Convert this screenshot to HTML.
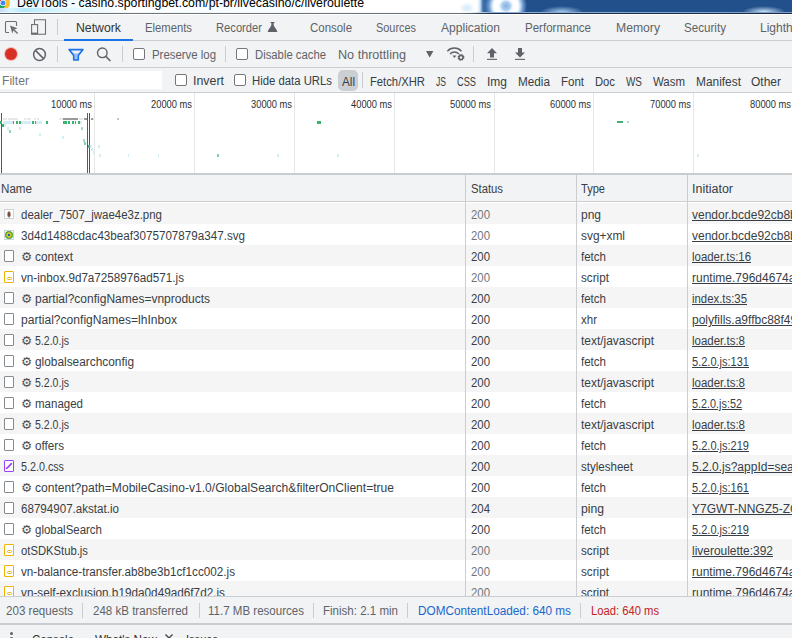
<!DOCTYPE html>
<html>
<head>
<meta charset="utf-8">
<title>DevTools</title>
<style>
html,body{margin:0;padding:0;}
body{width:792px;height:638px;overflow:hidden;position:relative;background:#fff;
 font-family:"Liberation Sans",sans-serif;font-size:12px;color:#383e45;}
.a{position:absolute;}
.t{position:absolute;white-space:nowrap;line-height:14px;transform-origin:0 0;}
.cb{position:absolute;width:10px;height:10px;border:1px solid #767676;border-radius:2px;background:#fff;}
.vd{position:absolute;width:1px;background:#cbcdd1;}
.row{position:absolute;left:0;width:792px;height:21px;background:#f5f5f5;}
.fi{position:absolute;left:4px;width:8px;height:10px;border:1px solid #868b90;border-radius:1px;background:#fff;}
.fi.js{border-color:#f0b400;}
.fi.css{border-color:#a142f4;}
.im{position:absolute;left:4px;width:8px;height:8px;border:1px solid #ced3db;background:#fff;}
.gl{position:absolute;top:93px;width:1px;height:80px;background:#e6e6e6;}
.d{position:absolute;height:3px;}
svg{position:absolute;overflow:visible;}
.z{z-index:3;}
.zb{z-index:2;}
</style>
</head>
<body>
<div class="a" style="left:0;top:0;width:792px;height:12px;background:#fff;"></div>
<div class="a" style="left:0;top:0;width:460px;height:12px;background:linear-gradient(90deg,#f2fcff 0,#eaf9ff 30px,#f6fdff 80px,#fff 140px,#f6fcff 250px,#fff 330px);"></div>
<div class="a" style="left:455px;top:0;width:337px;height:12px;background:linear-gradient(90deg,#fff 0,#fff 22px,#cfe3f7 25px,#3d6fab 28px,#2c5c99 34px,#22508a 40px);"></div>
<div class="a" style="left:459px;top:2px;width:16px;height:10px;background:radial-gradient(ellipse at 50% 60%,#cfe8fa 0,#fff 70%);"></div>
<div class="a" style="left:484px;top:0;width:44px;height:12px;overflow:hidden;"><div class="a" style="left:0;top:-16px;width:44px;height:44px;border-radius:50%;background:radial-gradient(circle,#8ab0dc 0,#a8cdf0 4px,#eef6fe 6.5px,#fff 8px,#fff 12px,#cfe3f7 14px,#6f9bd0 17px,rgba(34,80,138,0) 21px);"></div></div>
<div class="a" style="left:540px;top:6px;width:44px;height:6px;background:radial-gradient(ellipse at 50% 100%,#a8ccf0 0,#22508a 70%);"></div>
<div class="a" style="left:742px;top:6px;width:44px;height:6px;background:radial-gradient(ellipse at 50% 100%,#cfe6fb 0,#22508a 70%);"></div>
<div class="a" style="left:-4px;top:-4px;width:14px;height:14px;border-radius:50%;background:radial-gradient(circle,#4285f4 0,#4285f4 2px,#dbe7fb 2.7px,#dbe7fb 3px,rgba(255,255,255,0) 3.4px),conic-gradient(from 0deg at 9.5px 8.4px,#fbc02d 0 205deg,#1da462 205deg 282deg,#ea4335 282deg 330deg,#fbc02d 330deg);"></div>
<div class="a" style="left:0;top:8px;width:130px;height:4px;background:linear-gradient(90deg,#c9d8f4 0,#d8f4fd 10px,#b4e9fb 24px,#dcf5fd 60px,#fff 130px);"></div>
<div class="a" style="left:0;top:12px;width:792px;height:1px;background:linear-gradient(90deg,#eef6fb 0,#f4f9fc 470px,#8fb0d8 490px,#7a9cc8 792px);"></div>
<div class="a" style="left:0;top:13px;width:792px;height:1px;background:linear-gradient(90deg,#4a5a68 0,#6e7478 60px,#6e7478 460px,#1f2f48 490px,#1c2c44 792px);"></div>
<div class="a" style="left:0;top:14px;width:792px;height:1px;background:#fff;"></div>
<div class="a" style="left:0;top:15px;width:792px;height:25px;background:#f1f3f4;"></div>
<div class="a" style="left:0;top:40px;width:792px;height:1px;background:#cbcdd1;"></div>
<div class="a" style="left:64px;top:39px;width:69px;height:2px;background:#1a73e8;"></div>
<div class="vd" style="left:57px;top:19px;height:16px;"></div>
<div class="a" style="left:0;top:41px;width:792px;height:26px;background:#f1f3f4;"></div>
<div class="a" style="left:0;top:67px;width:792px;height:1px;background:#cbcdd1;"></div>
<div class="vd" style="left:57px;top:46px;height:16px;"></div>
<div class="vd" style="left:122px;top:46px;height:16px;"></div>
<div class="vd" style="left:225px;top:46px;height:16px;"></div>
<div class="vd" style="left:473px;top:46px;height:16px;"></div>
<div class="a" style="left:0;top:68px;width:792px;height:24px;background:#f1f3f4;"></div>
<div class="a" style="left:0;top:92px;width:792px;height:1px;background:#cbcdd1;"></div>
<div class="a" style="left:0;top:71px;width:162px;height:18px;background:#fff;"></div>
<div class="a" style="left:338px;top:70px;width:20px;height:21px;border-radius:5px;background:#cbcfd4;"></div>
<div class="vd" style="left:362px;top:72px;height:16px;"></div>
<div class="cb" style="left:133px;top:48px;"></div>
<div class="cb" style="left:236px;top:48px;"></div>
<div class="cb" style="left:175px;top:74px;"></div>
<div class="cb" style="left:234px;top:74px;"></div>
<div class="gl" style="left:94px;"></div>
<div class="gl" style="left:194px;"></div>
<div class="gl" style="left:294px;"></div>
<div class="gl" style="left:394px;"></div>
<div class="gl" style="left:494px;"></div>
<div class="gl" style="left:593px;"></div>
<div class="gl" style="left:693px;"></div>
<div class="a" style="left:1px;top:113px;width:1px;height:60px;background:#c1272d;"></div>
<div class="a" style="left:87px;top:113px;width:1px;height:60px;background:#1a66cc;"></div>
<div class="a" style="left:89px;top:113px;width:1px;height:60px;background:#c1272d;"></div>
<div class="a" style="left:0;top:173px;width:792px;height:2px;background:#c8cbcf;"></div>
<div class="d" style="left:3px;top:118px;width:1.5px;height:2px;background:#e8e8e8;"></div>
<div class="d" style="left:5px;top:118px;width:1.5px;height:2px;background:#e8e8e8;"></div>
<div class="d" style="left:8px;top:118px;width:1.5px;height:2px;background:#e8e8e8;"></div>
<div class="d" style="left:10px;top:118px;width:1.5px;height:2px;background:#e8e8e8;"></div>
<div class="d" style="left:12px;top:118px;width:1.5px;height:2px;background:#e8e8e8;"></div>
<div class="d" style="left:14px;top:118px;width:1.5px;height:2px;background:#e8e8e8;"></div>
<div class="d" style="left:16px;top:118px;width:1.5px;height:2px;background:#e8e8e8;"></div>
<div class="d" style="left:24px;top:118px;width:1.5px;height:2px;background:#e8e8e8;"></div>
<div class="d" style="left:27px;top:118px;width:1.5px;height:2px;background:#e8e8e8;"></div>
<div class="d" style="left:29px;top:118px;width:1.5px;height:2px;background:#e8e8e8;"></div>
<div class="d" style="left:34px;top:118px;width:1.5px;height:2px;background:#e8e8e8;"></div>
<div class="d" style="left:37px;top:118px;width:1.5px;height:2px;background:#e8e8e8;"></div>
<div class="d" style="left:59px;top:118px;width:4px;height:2px;background:#e8e8e8;"></div>
<div class="d" style="left:63px;top:118px;width:15px;height:2px;background:#9a9a9a;"></div>
<div class="d" style="left:79px;top:118px;width:4px;height:2px;background:#e8e8e8;"></div>
<div class="d" style="left:84px;top:118px;width:3px;height:2px;background:#9a9a9a;"></div>
<div class="d" style="left:91px;top:118px;width:2px;height:2px;background:#9a9a9a;"></div>
<div class="d" style="left:93px;top:118px;width:2px;height:2px;background:#e8e8e8;"></div>
<div class="d" style="left:117px;top:118px;width:2px;height:2px;background:#c4c4c4;"></div>
<div class="d" style="left:0px;top:121px;width:2px;height:3px;background:#3cb371;"></div>
<div class="d" style="left:3px;top:121px;width:10px;height:3px;background:#d4ecf6;"></div>
<div class="d" style="left:13px;top:121px;width:1px;height:3px;background:#3a93e0;"></div>
<div class="d" style="left:16px;top:121px;width:1.5px;height:3px;background:#3cb371;"></div>
<div class="d" style="left:19px;top:121px;width:2px;height:3px;background:#3cb371;"></div>
<div class="d" style="left:21px;top:121px;width:10px;height:3px;background:#d4ecf6;"></div>
<div class="d" style="left:32px;top:121px;width:1.5px;height:3px;background:#3cb371;"></div>
<div class="d" style="left:34.5px;top:121px;width:1.5px;height:3px;background:#3cb371;"></div>
<div class="d" style="left:36px;top:121px;width:6px;height:3px;background:#d4ecf6;"></div>
<div class="d" style="left:46px;top:121px;width:1.5px;height:3px;background:#3cb371;"></div>
<div class="d" style="left:63px;top:121px;width:4px;height:3px;background:#3cb371;"></div>
<div class="d" style="left:68px;top:121px;width:2px;height:3px;background:#3cb371;"></div>
<div class="d" style="left:72px;top:121px;width:2px;height:3px;background:#3cb371;"></div>
<div class="d" style="left:74.5px;top:121px;width:1px;height:3px;background:#3a93e0;"></div>
<div class="d" style="left:78px;top:121px;width:2px;height:3px;background:#3cb371;"></div>
<div class="d" style="left:80px;top:121px;width:2px;height:3px;background:#d4ecf6;"></div>
<div class="d" style="left:2px;top:124px;width:2px;height:3px;background:#3cb371;"></div>
<div class="d" style="left:4px;top:124px;width:2px;height:3px;background:#d4ecf6;"></div>
<div class="d" style="left:6.5px;top:127px;width:2px;height:3px;background:#d4ecf6;"></div>
<div class="d" style="left:18.5px;top:127px;width:2px;height:3px;background:#d4ecf6;"></div>
<div class="d" style="left:81px;top:127px;width:2px;height:3px;background:#a9dcc8;"></div>
<div class="d" style="left:9px;top:130px;width:2px;height:3px;background:#8fd6b8;"></div>
<div class="d" style="left:39px;top:133px;width:2px;height:3px;background:#d4ecf6;"></div>
<div class="d" style="left:61.5px;top:136px;width:2px;height:3px;background:#d4ecf6;"></div>
<div class="d" style="left:82.5px;top:139px;width:2px;height:3px;background:#9edcc0;"></div>
<div class="d" style="left:84px;top:142px;width:2px;height:3px;background:#7fd0a8;"></div>
<div class="d" style="left:88px;top:145px;width:2px;height:3px;background:#4fae82;"></div>
<div class="d" style="left:90px;top:145px;width:2px;height:3px;background:#d4ecf6;"></div>
<div class="d" style="left:98px;top:145px;width:2px;height:3px;background:#d4ecf6;"></div>
<div class="d" style="left:91px;top:148px;width:2px;height:3px;background:#d4ecf6;"></div>
<div class="d" style="left:93px;top:151px;width:2px;height:3px;background:#d4ecf6;"></div>
<div class="d" style="left:99px;top:154px;width:2px;height:3px;background:#d4ecf6;"></div>
<div class="d" style="left:127.5px;top:154px;width:1.5px;height:3px;background:#d4ecf6;"></div>
<div class="d" style="left:157.5px;top:154px;width:1.5px;height:3px;background:#d4ecf6;"></div>
<div class="d" style="left:217px;top:154px;width:1.5px;height:3px;background:#7fd0b0;"></div>
<div class="d" style="left:277px;top:154px;width:1.5px;height:3px;background:#d4ecf6;"></div>
<div class="d" style="left:337px;top:154px;width:1.5px;height:3px;background:#d4ecf6;"></div>
<div class="d" style="left:697px;top:154px;width:1.5px;height:3px;background:#d4ecf6;"></div>
<div class="d" style="left:317px;top:121px;width:4px;height:3px;background:#3cb371;"></div>
<div class="d" style="left:617px;top:121px;width:6px;height:2px;background:#3cb371;"></div>
<div class="d" style="left:627px;top:121px;width:2px;height:2px;background:#a8e0c0;"></div>
<div class="a" style="left:0;top:175px;width:792px;height:26px;background:#f1f3f4;"></div>
<div class="a" style="left:0;top:201px;width:792px;height:1px;background:#cbcdd1;"></div>
<div class="row" style="top:203px;"></div>
<div class="im" style="top:209px;"></div>
<div class="a" style="left:6px;top:210px;width:6px;height:8px;background:radial-gradient(ellipse 2.2px 4px at 50% 55%,#5e342a 0,#8a5a4c 50%,rgba(240,220,215,0) 100%);"></div>
<div class="im" style="top:230px;"></div>
<div class="a" style="left:5px;top:231px;width:8px;height:8px;border-radius:50%;background:radial-gradient(circle,#2060d0 0 1.2px,#d8c820 1.6px 2.4px,#4ea832 3px);"></div>
<div class="row" style="top:245px;"></div>
<div class="fi" style="top:250px;"></div>
<div class="fi js" style="top:271px;"></div>
<div class="a" style="left:6.5px;top:277px;width:3px;height:1px;border:1px solid #f0b400;border-radius:2px;"></div>
<div class="row" style="top:287px;"></div>
<div class="fi" style="top:292px;"></div>
<div class="fi" style="top:313px;"></div>
<div class="row" style="top:329px;"></div>
<div class="fi" style="top:334px;"></div>
<div class="fi" style="top:355px;"></div>
<div class="row" style="top:371px;"></div>
<div class="fi" style="top:376px;"></div>
<div class="fi" style="top:397px;"></div>
<div class="row" style="top:413px;"></div>
<div class="fi" style="top:418px;"></div>
<div class="fi" style="top:439px;"></div>
<div class="row" style="top:455px;"></div>
<div class="fi css" style="top:460px;"></div>
<svg style="left:4px;top:460px;" width="10" height="12"><path d="M2.6 8.4L3.4 7.6M4.4 6.8L7.4 3.6" stroke="#a142f4" stroke-width="1.7" stroke-linecap="round" fill="none"/></svg>
<div class="fi" style="top:481px;"></div>
<div class="row" style="top:497px;"></div>
<div class="fi" style="top:502px;"></div>
<div class="fi" style="top:523px;"></div>
<div class="row" style="top:539px;"></div>
<div class="fi js" style="top:544px;"></div>
<div class="a" style="left:6.5px;top:550px;width:3px;height:1px;border:1px solid #f0b400;border-radius:2px;"></div>
<div class="fi js" style="top:565px;"></div>
<div class="a" style="left:6.5px;top:571px;width:3px;height:1px;border:1px solid #f0b400;border-radius:2px;"></div>
<div class="row" style="top:581px;"></div>
<div class="fi js" style="top:586px;"></div>
<div class="a" style="left:6.5px;top:592px;width:3px;height:1px;border:1px solid #f0b400;border-radius:2px;"></div>
<div class="vd" style="left:465px;top:175px;height:421px;"></div>
<div class="vd" style="left:576px;top:175px;height:421px;"></div>
<div class="vd" style="left:687px;top:175px;height:421px;"></div>
<div class="a zb" style="left:0;top:596px;width:792px;height:1px;background:#cbcdd1;"></div>
<div class="a zb" style="left:0;top:597px;width:792px;height:26px;background:#f1f3f4;"></div>
<div class="vd zb" style="left:82px;top:603px;height:15px;"></div>
<div class="vd zb" style="left:199px;top:603px;height:15px;"></div>
<div class="vd zb" style="left:313px;top:603px;height:15px;"></div>
<div class="vd zb" style="left:407px;top:603px;height:15px;"></div>
<div class="vd zb" style="left:580px;top:603px;height:15px;"></div>
<div class="a zb" style="left:0;top:623px;width:792px;height:2px;background:#c8cbcf;"></div>
<div class="a zb" style="left:0;top:625px;width:792px;height:13px;background:#f1f3f4;"></div>
<div class="a zb" style="left:10px;top:632px;width:3px;height:3px;border-radius:50%;background:#5f6368;"></div>
<div class="a zb" style="left:10px;top:637px;width:3px;height:3px;border-radius:50%;background:#5f6368;"></div>
<svg class="zb" style="left:165px;top:634px;" width="8" height="8"><path d="M0.5 0.5L7.5 7.5M7.5 0.5L0.5 7.5" stroke="#444" stroke-width="1.4" fill="none"/></svg>
<svg style="left:4px;top:20px;" width="16" height="16"><path d="M12.5 6V2.5a1 1 0 0 0-1-1h-9a1 1 0 0 0-1 1v9a1 1 0 0 0 1 1H5" stroke="#6e6e6e" stroke-width="1.1" fill="none"/><path d="M6 5.5l7.5 2.8-3 1.2 3.6 3.6-1 1-3.6-3.6-1.2 3z" fill="#6e6e6e"/></svg>
<svg style="left:30px;top:18px;" width="18" height="18"><path d="M4.5 6V1.8h11v14.4H8" stroke="#6e6e6e" stroke-width="1.1" fill="none"/><rect x="1.6" y="6.6" width="6" height="9.6" stroke="#6e6e6e" stroke-width="1.1" fill="none"/><rect x="1.6" y="14.6" width="6" height="1.8" fill="#6e6e6e"/></svg>
<svg style="left:267px;top:22px;" width="11" height="10"><path d="M3.5 0h4v1h-.8v2.6L10.2 9a.6.6 0 0 1-.5.9H1.3a.6.6 0 0 1-.5-.9L4.3 3.6V1h-.8z" fill="#5f6368"/></svg>
<div class="a" style="left:4px;top:47px;width:14px;height:14px;border-radius:50%;background:#f4b8b4;"></div>
<div class="a" style="left:5px;top:48px;width:12px;height:12px;border-radius:50%;background:#d93025;"></div>
<svg style="left:32px;top:47px;" width="15" height="15"><circle cx="7.5" cy="7.5" r="5.9" stroke="#5f6368" stroke-width="1.5" fill="none"/><path d="M3.4 3.4L11.6 11.6" stroke="#5f6368" stroke-width="1.5"/></svg>
<svg style="left:68px;top:48px;" width="16" height="14"><path d="M1 1.6h14L10.3 7.4v4.6H5.7V7.4z" fill="#9fc3f8" stroke="#1a73e8" stroke-width="1.6" stroke-linejoin="round"/><path d="M3.4 2.7h9.2l-2.4 2.6h-4.4z" fill="#f1f3f4"/></svg>
<svg style="left:96px;top:46px;" width="16" height="16"><circle cx="6.3" cy="6.8" r="4.8" stroke="#5f6368" stroke-width="1.4" fill="none"/><path d="M9.8 10.4L14.4 15" stroke="#5f6368" stroke-width="1.5"/></svg>
<svg style="left:426px;top:51px;" width="8" height="7"><path d="M0 0h7.4L3.7 6.4z" fill="#5f6368"/></svg>
<svg style="left:446px;top:46px;" width="20" height="16"><path d="M1.4 5.2a9.5 9.5 0 0 1 14 0" stroke="#5f6368" stroke-width="1.5" fill="none"/><path d="M4 8a6 6 0 0 1 8.8 0" stroke="#5f6368" stroke-width="1.5" fill="none"/><path d="M6.4 9.6h4l-2 2.4z" fill="#5f6368"/><circle cx="15" cy="11.4" r="2.6" stroke="#5f6368" stroke-width="1.6" fill="none" stroke-dasharray="1.36 0.68"/><circle cx="15" cy="11.4" r="1.9" stroke="#5f6368" stroke-width="1.3" fill="none"/></svg>
<svg style="left:487px;top:48px;" width="10" height="12"><path d="M5 0l5 5.2H7V9.6H3V5.2H0z" fill="#5f6368"/><rect x="0" y="10.8" width="10" height="1.1" fill="#5f6368"/></svg>
<svg style="left:515px;top:48px;" width="10" height="12"><path d="M3 0h4v4.4h3L5 9.6 0 4.4h3z" fill="#5f6368"/><rect x="0" y="10.8" width="10" height="1.1" fill="#5f6368"/></svg>
<span class="t" style="left:17px;top:-4px;color:#000;font-size:12.5px;transform:scaleX(0.9851);">DevTools - casino.sportingbet.com/pt-br/livecasino/c/liveroulette</span>
<span class="t" style="left:76px;top:21px;color:#333;transform:scaleX(1.0224);">Network</span>
<span class="t" style="left:145px;top:21px;color:#5f6368;transform:scaleX(0.9394);">Elements</span>
<span class="t" style="left:216px;top:21px;color:#5f6368;transform:scaleX(0.9319);">Recorder</span>
<span class="t" style="left:310px;top:21px;color:#5f6368;transform:scaleX(0.9539);">Console</span>
<span class="t" style="left:376px;top:21px;color:#5f6368;transform:scaleX(0.9084);">Sources</span>
<span class="t" style="left:441px;top:21px;color:#5f6368;transform:scaleX(1.0048);">Application</span>
<span class="t" style="left:525px;top:21px;color:#5f6368;transform:scaleX(0.9607);">Performance</span>
<span class="t" style="left:616px;top:21px;color:#5f6368;transform:scaleX(1.0151);">Memory</span>
<span class="t" style="left:684px;top:21px;color:#5f6368;transform:scaleX(0.9686);">Security</span>
<span class="t" style="left:760px;top:21px;color:#5f6368;">Lighthouse</span>
<span class="t" style="left:152px;top:48px;color:#5f6368;transform:scaleX(0.9499);">Preserve log</span>
<span class="t" style="left:255px;top:48px;color:#5f6368;transform:scaleX(0.9420);">Disable cache</span>
<span class="t" style="left:338px;top:48px;color:#5f6368;transform:scaleX(1.0510);">No throttling</span>
<span class="t" style="left:2px;top:74px;color:#757575;transform:scaleX(1.0123);">Filter</span>
<span class="t" style="left:193px;top:74px;transform:scaleX(1.0328);">Invert</span>
<span class="t" style="left:252px;top:74px;transform:scaleX(0.9443);">Hide data URLs</span>
<span class="t" style="left:342px;top:75px;transform:scaleX(0.9742);">All</span>
<span class="t" style="left:370px;top:75px;transform:scaleX(0.9372);">Fetch/XHR</span>
<span class="t" style="left:436px;top:75px;transform:scaleX(0.7135);">JS</span>
<span class="t" style="left:457px;top:75px;transform:scaleX(0.7696);">CSS</span>
<span class="t" style="left:487px;top:75px;">Img</span>
<span class="t" style="left:518px;top:75px;transform:scaleX(0.9790);">Media</span>
<span class="t" style="left:561px;top:75px;transform:scaleX(0.9577);">Font</span>
<span class="t" style="left:595px;top:75px;transform:scaleX(0.9370);">Doc</span>
<span class="t" style="left:626px;top:75px;transform:scaleX(0.8271);">WS</span>
<span class="t" style="left:653px;top:75px;transform:scaleX(0.9534);">Wasm</span>
<span class="t" style="left:696px;top:75px;transform:scaleX(0.9921);">Manifest</span>
<span class="t" style="left:751px;top:75px;">Other</span>
<span class="t" style="left:51px;top:97px;color:#2c3036;font-size:11px;transform:scaleX(0.8486);">10000 ms</span>
<span class="t" style="left:151px;top:97px;color:#2c3036;font-size:11px;transform:scaleX(0.8486);">20000 ms</span>
<span class="t" style="left:251px;top:97px;color:#2c3036;font-size:11px;transform:scaleX(0.8486);">30000 ms</span>
<span class="t" style="left:351px;top:97px;color:#2c3036;font-size:11px;transform:scaleX(0.8486);">40000 ms</span>
<span class="t" style="left:450px;top:97px;color:#2c3036;font-size:11px;transform:scaleX(0.8486);">50000 ms</span>
<span class="t" style="left:550px;top:97px;color:#2c3036;font-size:11px;transform:scaleX(0.8486);">60000 ms</span>
<span class="t" style="left:650px;top:97px;color:#2c3036;font-size:11px;transform:scaleX(0.8486);">70000 ms</span>
<span class="t" style="left:750px;top:97px;color:#2c3036;font-size:11px;transform:scaleX(0.8486);">80000 ms</span>
<span class="t" style="left:1px;top:182px;transform:scaleX(0.9683);">Name</span>
<span class="t" style="left:471px;top:182px;transform:scaleX(0.9403);">Status</span>
<span class="t" style="left:581px;top:182px;transform:scaleX(0.9225);">Type</span>
<span class="t" style="left:692px;top:182px;transform:scaleX(1.0417);">Initiator</span>
<span class="t" style="left:21px;top:208px;transform:scaleX(0.9561);">dealer_7507_jwae4e3z.png</span>
<span class="t" style="left:471px;top:208px;color:#70757a;transform:scaleX(0.9485);">200</span>
<span class="t" style="left:581px;top:208px;">png</span>
<span class="t" style="left:692px;top:208px;text-decoration:underline;">vendor.bcde92cb8b4</span>
<span class="t" style="left:21px;top:229px;transform:scaleX(0.9702);">3d4d1488cdac43beaf3075707879a347.svg</span>
<span class="t" style="left:471px;top:229px;color:#70757a;transform:scaleX(0.9485);">200</span>
<span class="t" style="left:581px;top:229px;transform:scaleX(0.9922);">svg+xml</span>
<span class="t" style="left:692px;top:229px;text-decoration:underline;">vendor.bcde92cb8b4</span>
<span class="t" style="left:21px;top:250px;color:#50545a;font-size:12.5px;font-family:'DejaVu Sans',sans-serif;">⚙</span>
<span class="t" style="left:35px;top:250px;transform:scaleX(0.9818);">context</span>
<span class="t" style="left:471px;top:250px;transform:scaleX(0.9485);">200</span>
<span class="t" style="left:581px;top:250px;transform:scaleX(0.9610);">fetch</span>
<span class="t" style="left:692px;top:250px;transform:scaleX(0.9509);text-decoration:underline;">loader.ts:16</span>
<span class="t" style="left:21px;top:271px;transform:scaleX(0.9732);">vn-inbox.9d7a7258976ad571.js</span>
<span class="t" style="left:471px;top:271px;color:#70757a;transform:scaleX(0.9485);">200</span>
<span class="t" style="left:581px;top:271px;transform:scaleX(0.9766);">script</span>
<span class="t" style="left:692px;top:271px;text-decoration:underline;">runtime.796d4674a4</span>
<span class="t" style="left:21px;top:292px;color:#50545a;font-size:12.5px;font-family:'DejaVu Sans',sans-serif;">⚙</span>
<span class="t" style="left:35px;top:292px;">partial?configNames=vnproducts</span>
<span class="t" style="left:471px;top:292px;transform:scaleX(0.9485);">200</span>
<span class="t" style="left:581px;top:292px;transform:scaleX(0.9610);">fetch</span>
<span class="t" style="left:692px;top:292px;transform:scaleX(0.9475);text-decoration:underline;">index.ts:35</span>
<span class="t" style="left:21px;top:313px;transform:scaleX(1.0058);">partial?configNames=lhInbox</span>
<span class="t" style="left:471px;top:313px;transform:scaleX(0.9485);">200</span>
<span class="t" style="left:581px;top:313px;transform:scaleX(0.9597);">xhr</span>
<span class="t" style="left:692px;top:313px;text-decoration:underline;">polyfills.a9ffbc88f49</span>
<span class="t" style="left:21px;top:334px;color:#50545a;font-size:12.5px;font-family:'DejaVu Sans',sans-serif;">⚙</span>
<span class="t" style="left:35px;top:334px;transform:scaleX(0.8785);">5.2.0.js</span>
<span class="t" style="left:471px;top:334px;transform:scaleX(0.9485);">200</span>
<span class="t" style="left:581px;top:334px;transform:scaleX(0.9951);">text/javascript</span>
<span class="t" style="left:692px;top:334px;transform:scaleX(0.9571);text-decoration:underline;">loader.ts:8</span>
<span class="t" style="left:21px;top:355px;color:#50545a;font-size:12.5px;font-family:'DejaVu Sans',sans-serif;">⚙</span>
<span class="t" style="left:35px;top:355px;transform:scaleX(0.9892);">globalsearchconfig</span>
<span class="t" style="left:471px;top:355px;transform:scaleX(0.9485);">200</span>
<span class="t" style="left:581px;top:355px;transform:scaleX(0.9610);">fetch</span>
<span class="t" style="left:692px;top:355px;transform:scaleX(0.9187);text-decoration:underline;">5.2.0.js:131</span>
<span class="t" style="left:21px;top:376px;color:#50545a;font-size:12.5px;font-family:'DejaVu Sans',sans-serif;">⚙</span>
<span class="t" style="left:35px;top:376px;transform:scaleX(0.8785);">5.2.0.js</span>
<span class="t" style="left:471px;top:376px;transform:scaleX(0.9485);">200</span>
<span class="t" style="left:581px;top:376px;transform:scaleX(0.9951);">text/javascript</span>
<span class="t" style="left:692px;top:376px;transform:scaleX(0.9571);text-decoration:underline;">loader.ts:8</span>
<span class="t" style="left:21px;top:397px;color:#50545a;font-size:12.5px;font-family:'DejaVu Sans',sans-serif;">⚙</span>
<span class="t" style="left:35px;top:397px;transform:scaleX(0.9591);">managed</span>
<span class="t" style="left:471px;top:397px;transform:scaleX(0.9485);">200</span>
<span class="t" style="left:581px;top:397px;transform:scaleX(0.9610);">fetch</span>
<span class="t" style="left:692px;top:397px;transform:scaleX(0.9029);text-decoration:underline;">5.2.0.js:52</span>
<span class="t" style="left:21px;top:418px;color:#50545a;font-size:12.5px;font-family:'DejaVu Sans',sans-serif;">⚙</span>
<span class="t" style="left:35px;top:418px;transform:scaleX(0.8785);">5.2.0.js</span>
<span class="t" style="left:471px;top:418px;transform:scaleX(0.9485);">200</span>
<span class="t" style="left:581px;top:418px;transform:scaleX(0.9951);">text/javascript</span>
<span class="t" style="left:692px;top:418px;transform:scaleX(0.9571);text-decoration:underline;">loader.ts:8</span>
<span class="t" style="left:21px;top:439px;color:#50545a;font-size:12.5px;font-family:'DejaVu Sans',sans-serif;">⚙</span>
<span class="t" style="left:35px;top:439px;transform:scaleX(0.9733);">offers</span>
<span class="t" style="left:471px;top:439px;transform:scaleX(0.9485);">200</span>
<span class="t" style="left:581px;top:439px;transform:scaleX(0.9610);">fetch</span>
<span class="t" style="left:692px;top:439px;transform:scaleX(0.9187);text-decoration:underline;">5.2.0.js:219</span>
<span class="t" style="left:21px;top:460px;transform:scaleX(0.8953);">5.2.0.css</span>
<span class="t" style="left:471px;top:460px;transform:scaleX(0.9485);">200</span>
<span class="t" style="left:581px;top:460px;transform:scaleX(0.9624);">stylesheet</span>
<span class="t" style="left:692px;top:460px;text-decoration:underline;">5.2.0.js?appId=search</span>
<span class="t" style="left:21px;top:481px;color:#50545a;font-size:12.5px;font-family:'DejaVu Sans',sans-serif;">⚙</span>
<span class="t" style="left:35px;top:481px;transform:scaleX(1.0060);">content?path=MobileCasino-v1.0/GlobalSearch&amp;filterOnClient=true</span>
<span class="t" style="left:471px;top:481px;transform:scaleX(0.9485);">200</span>
<span class="t" style="left:581px;top:481px;transform:scaleX(0.9610);">fetch</span>
<span class="t" style="left:692px;top:481px;transform:scaleX(0.9187);text-decoration:underline;">5.2.0.js:161</span>
<span class="t" style="left:21px;top:502px;transform:scaleX(0.9663);">68794907.akstat.io</span>
<span class="t" style="left:471px;top:502px;transform:scaleX(0.9485);">204</span>
<span class="t" style="left:581px;top:502px;transform:scaleX(1.0138);">ping</span>
<span class="t" style="left:692px;top:502px;text-decoration:underline;">Y7GWT-NNGZ5-ZQ2</span>
<span class="t" style="left:21px;top:523px;color:#50545a;font-size:12.5px;font-family:'DejaVu Sans',sans-serif;">⚙</span>
<span class="t" style="left:35px;top:523px;transform:scaleX(0.9563);">globalSearch</span>
<span class="t" style="left:471px;top:523px;transform:scaleX(0.9485);">200</span>
<span class="t" style="left:581px;top:523px;transform:scaleX(0.9610);">fetch</span>
<span class="t" style="left:692px;top:523px;transform:scaleX(0.9187);text-decoration:underline;">5.2.0.js:219</span>
<span class="t" style="left:21px;top:544px;transform:scaleX(0.9387);">otSDKStub.js</span>
<span class="t" style="left:471px;top:544px;color:#70757a;transform:scaleX(0.9485);">200</span>
<span class="t" style="left:581px;top:544px;transform:scaleX(0.9766);">script</span>
<span class="t" style="left:692px;top:544px;transform:scaleX(0.9952);text-decoration:underline;">liveroulette:392</span>
<span class="t" style="left:21px;top:565px;transform:scaleX(0.9750);">vn-balance-transfer.ab8be3b1cf1cc002.js</span>
<span class="t" style="left:471px;top:565px;color:#70757a;transform:scaleX(0.9485);">200</span>
<span class="t" style="left:581px;top:565px;transform:scaleX(0.9766);">script</span>
<span class="t" style="left:692px;top:565px;text-decoration:underline;">runtime.796d4674a4</span>
<span class="t" style="left:21px;top:586px;transform:scaleX(0.9800);">vn-self-exclusion.b19da0d49ad6f7d2.js</span>
<span class="t" style="left:471px;top:586px;color:#70757a;transform:scaleX(0.9485);">200</span>
<span class="t" style="left:581px;top:586px;transform:scaleX(0.9766);">script</span>
<span class="t" style="left:692px;top:586px;text-decoration:underline;">runtime.796d4674a4</span>
<span class="t z" style="left:6px;top:604px;color:#5f6368;transform:scaleX(0.9655);">203 requests</span>
<span class="t z" style="left:93px;top:604px;color:#5f6368;transform:scaleX(0.9623);">248 kB transferred</span>
<span class="t z" style="left:208px;top:604px;color:#5f6368;transform:scaleX(0.9617);">11.7 MB resources</span>
<span class="t z" style="left:323px;top:604px;color:#5f6368;transform:scaleX(0.9612);">Finish: 2.1 min</span>
<span class="t z" style="left:418px;top:604px;color:#1a66cc;transform:scaleX(0.9802);">DOMContentLoaded: 640 ms</span>
<span class="t z" style="left:591px;top:604px;color:#c5221f;transform:scaleX(0.9351);">Load: 640 ms</span>
<span class="t z" style="left:32px;top:633px;color:#333;transform:scaleX(0.9539);">Console</span>
<span class="t z" style="left:95px;top:633px;color:#333;transform:scaleX(0.9742);">What&#x27;s New</span>
<span class="t z" style="left:186px;top:633px;color:#333;transform:scaleX(0.9225);">Issues</span>
</body>
</html>
